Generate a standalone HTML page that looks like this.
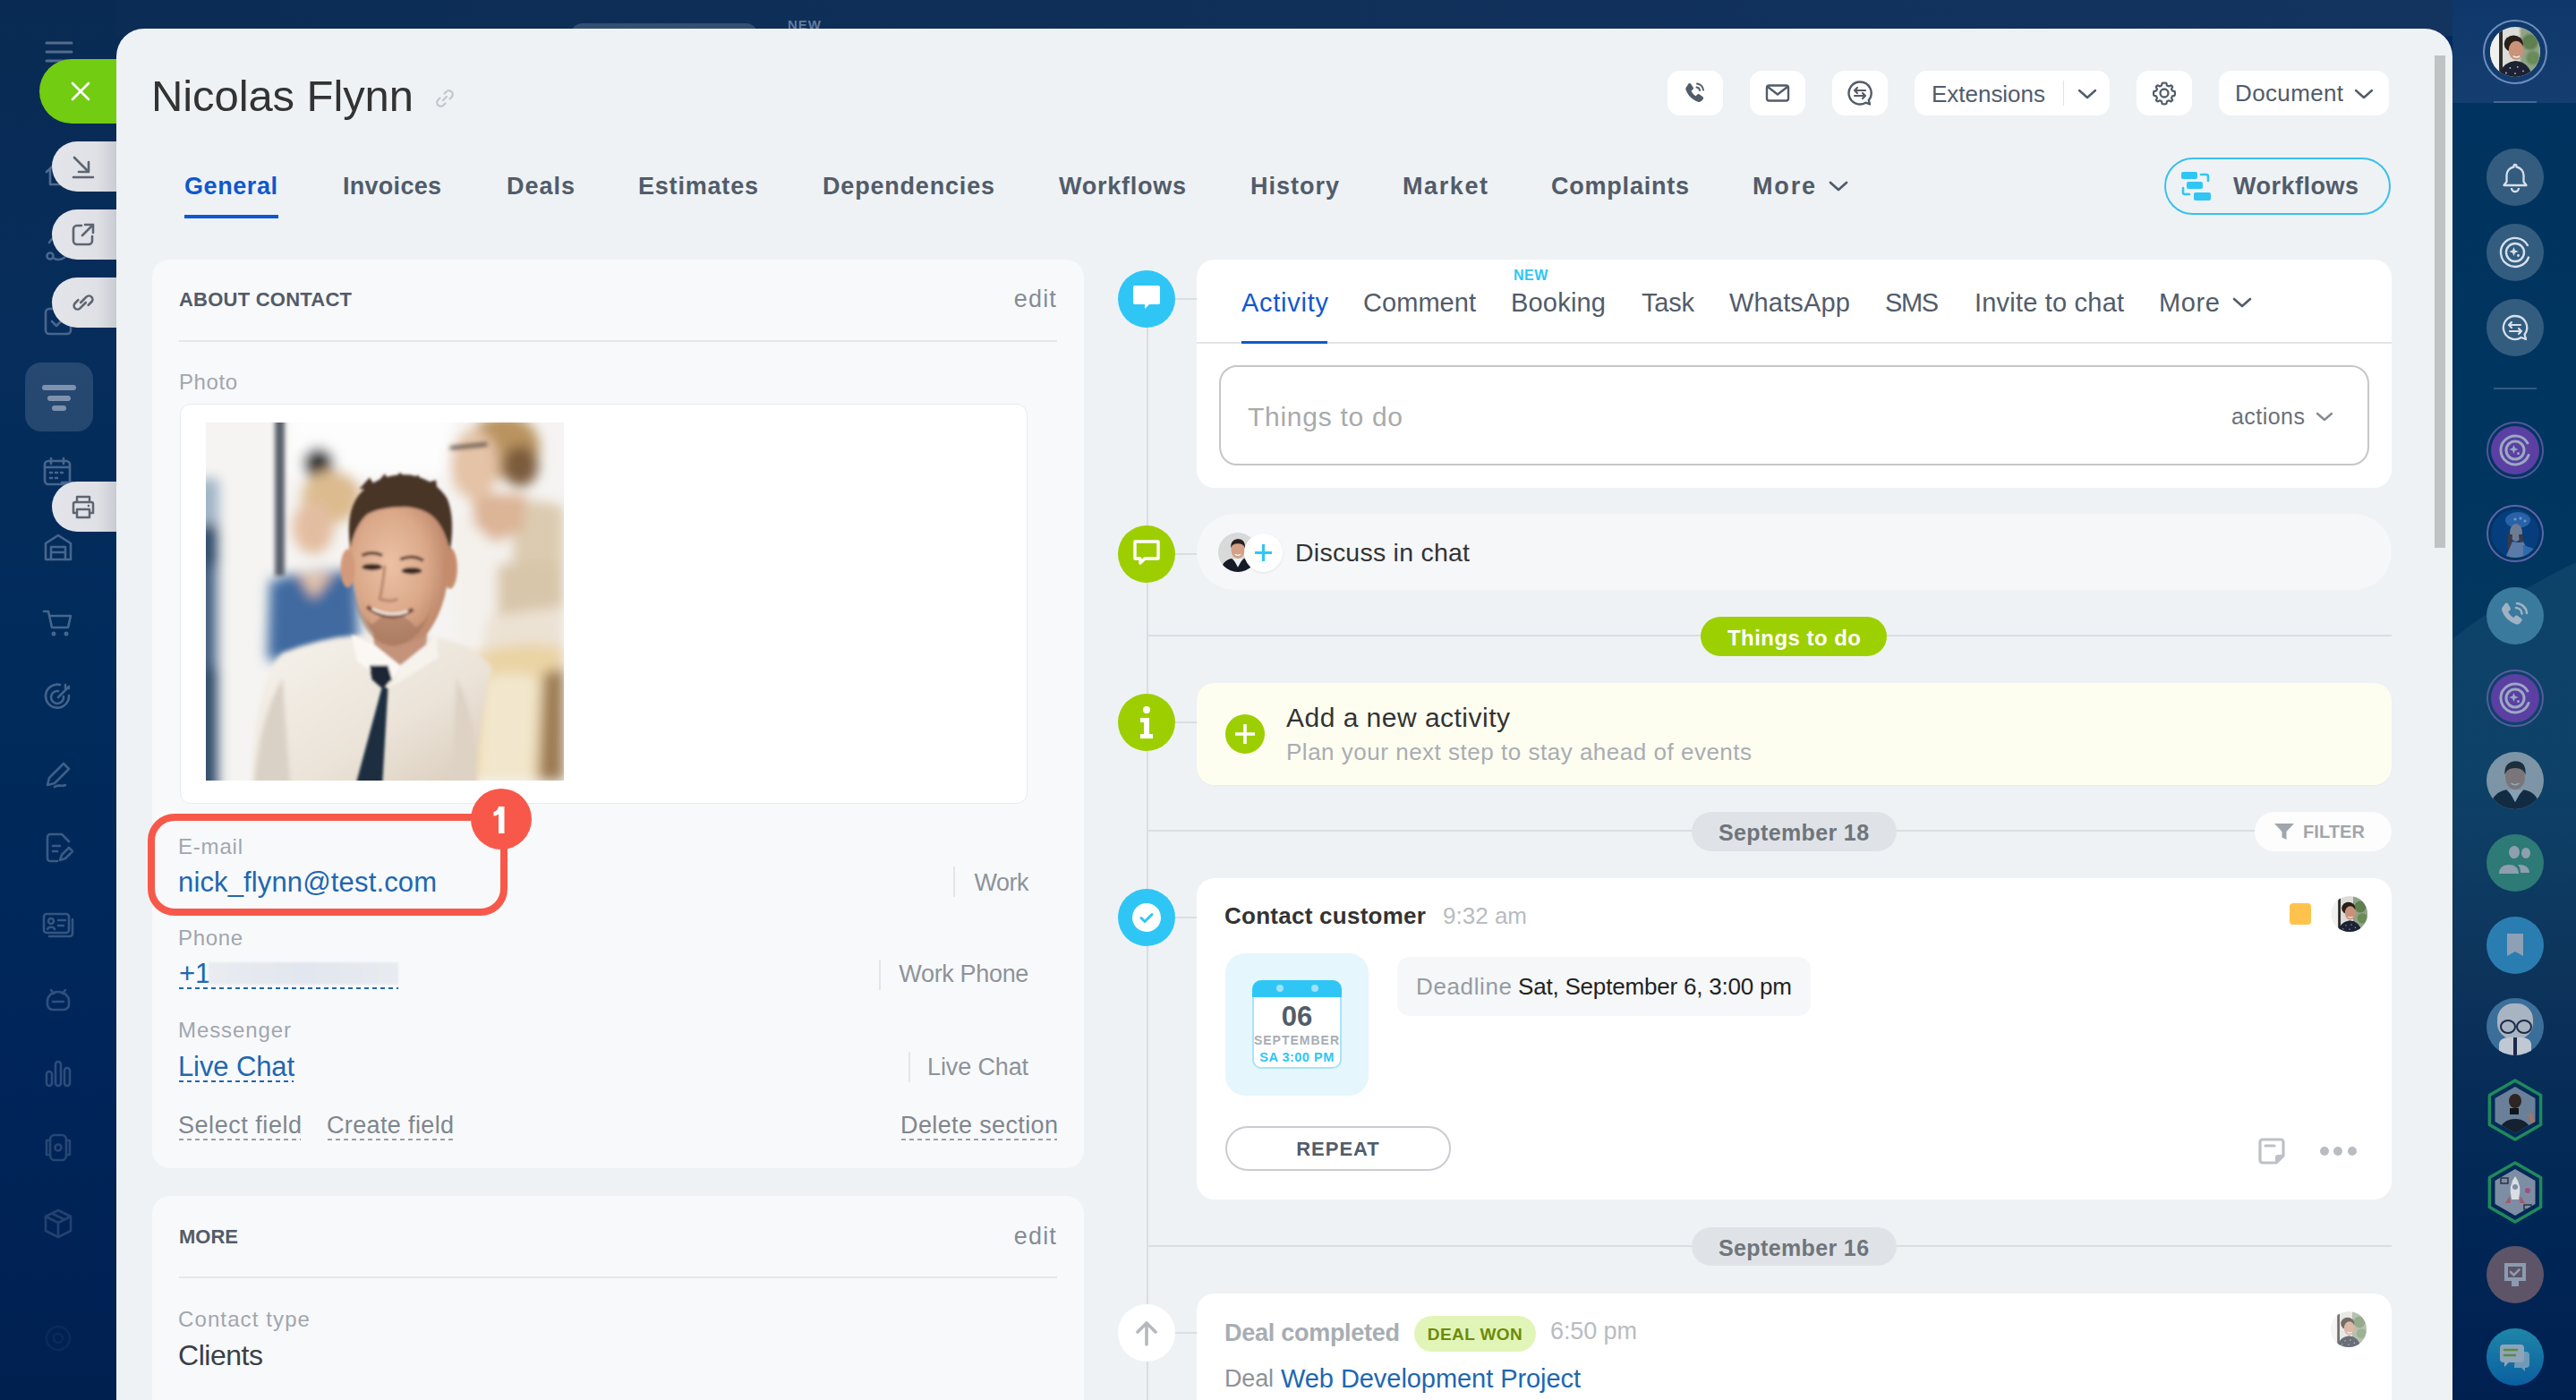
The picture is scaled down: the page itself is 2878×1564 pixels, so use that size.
<!DOCTYPE html>
<html><head><meta charset="utf-8"><style>
html,body{margin:0;padding:0;background:#002b5a;}
body{width:2878px;height:1564px;overflow:hidden;position:relative;font-family:"Liberation Sans", sans-serif;background:#002b5a;}
.t{position:absolute;line-height:1;white-space:nowrap;}
svg{display:block;}
</style></head><body>
<div style="position:absolute;left:0px;top:0px;width:140px;height:1564px;background:linear-gradient(180deg,#092b53 0%,#062d5c 25%,#002b5a 50%,#00255a 75%,#002050 100%);"></div><div style="position:absolute;left:130px;top:0px;width:2620px;height:40px;background:linear-gradient(90deg,#0b2c55 0%,#10305a 50%,#12345f 100%);"></div><div style="position:absolute;left:637px;top:26px;width:210px;height:30px;background:rgba(255,255,255,0.16);border-radius:14px;"></div><div class="t" style="left:880px;top:20.3px;font-size:15px;color:#647c9c;font-weight:700;letter-spacing:1px;">NEW</div><div style="position:absolute;left:2740px;top:0px;width:138px;height:1564px;background:linear-gradient(180deg,#00335f 0%,#00365f 40%,#063a62 55%,#0a3058 70%,#002656 88%,#002050 100%);"></div><div style="position:absolute;left:2740px;top:0px;width:138px;height:115px;background:linear-gradient(180deg,#0f376b,#153e70);"></div><div style="position:absolute;left:2786px;top:113px;width:48px;height:2px;background:rgba(160,180,210,0.35);"></div><div style="position:absolute;left:2786px;top:433px;width:48px;height:2px;background:rgba(160,180,210,0.30);"></div><div style="position:absolute;left:2740px;top:0;width:138px;height:1564px;overflow:hidden;"><div style="position:absolute;left:-285px;top:555px;width:1490px;height:1490px;border-radius:50%;background:linear-gradient(180deg,rgba(60,110,140,0.25) 0%,rgba(60,110,140,0.12) 25%,rgba(60,110,140,0) 45%);"></div></div><div style="position:absolute;left:2774px;top:22px;width:72px;height:72px;border-radius:50%;box-sizing:border-box;border:2.5px solid rgba(140,170,215,0.75);"></div><div style="position:absolute;left:2782px;top:30px;width:56px;height:56px;"><svg width="56" height="56" viewBox="0 0 100 100"><defs><clipPath id="wcr1"><circle cx="50" cy="50" r="50"/></clipPath><filter id="wfr1"><feGaussianBlur stdDeviation="1.5"/></filter></defs><g clip-path="url(#wcr1)"><rect width="100" height="100" fill="#dcdcd8"/><rect x="0" width="22" height="100" fill="#f2f1ee"/><g filter="url(#wfr1)"><rect x="60" y="0" width="40" height="100" fill="#8fa386"/><circle cx="80" cy="30" r="16" fill="#5f7f4f"/><circle cx="86" cy="62" r="14" fill="#6a8a58"/></g><rect x="18" y="5" width="7" height="95" fill="#2b2b2b"/><ellipse cx="47" cy="34" rx="19" ry="17" fill="#2a1e19"/><ellipse cx="52" cy="47" rx="15" ry="19" fill="#c99379"/><path d="M46 58q7 5 13 0" stroke="#fff" stroke-width="2.5" fill="none"/><path d="M18 100q4-28 32-32q28 2 34 32z" fill="#1c2233"/><circle cx="40" cy="82" r="1.6" fill="#bcc4d6"/><circle cx="55" cy="80" r="1.6" fill="#bcc4d6"/><circle cx="66" cy="88" r="1.6" fill="#bcc4d6"/><circle cx="32" cy="92" r="1.6" fill="#bcc4d6"/><circle cx="50" cy="93" r="1.6" fill="#bcc4d6"/></g></svg></div><div style="position:absolute;left:2778px;top:166px;width:64px;height:64px;border-radius:50%;background:rgba(255,255,255,0.2);"></div><svg style="position:absolute;left:2792px;top:180px;" width="36" height="36" viewBox="0 0 36 36"><path d="M18 4a1.5 1.5 0 0 1 1.5 1.5v1a9.5 9.5 0 0 1 8 9.5v7l3 4H5.5l3-4v-7a9.5 9.5 0 0 1 8-9.5v-1A1.5 1.5 0 0 1 18 4zM14 30a4 4 0 0 0 8 0" stroke="#d6e0ec" stroke-width="2.3" fill="none" stroke-linejoin="round"/></svg><div style="position:absolute;left:2778px;top:250px;width:64px;height:64px;border-radius:50%;background:rgba(255,255,255,0.2);"></div><svg style="position:absolute;left:2790px;top:262px;" width="40" height="40" viewBox="0 0 40 40"><path d="M33.9 12A16 16 0 1 0 35 25.5" stroke="#d6e0ec" stroke-width="2.4" fill="none" stroke-linecap="round"/><circle cx="20" cy="20" r="10" stroke="#d6e0ec" stroke-width="2.4" fill="none"/><path d="M18.5 14l1.4 3.6 3.6 1.4-3.6 1.4-1.4 3.6-1.4-3.6-3.6-1.4 3.6-1.4z" fill="#d6e0ec"/><circle cx="23.5" cy="23.5" r="1.4" fill="#d6e0ec"/></svg><div style="position:absolute;left:2778px;top:334px;width:64px;height:64px;border-radius:50%;background:rgba(255,255,255,0.2);"></div><svg style="position:absolute;left:2792px;top:348px;" width="36" height="36" viewBox="0 0 36 36"><path d="M18 5a13 13 0 1 0 6.8 24l5.2 2-1.4-5.2A13 13 0 0 0 18 5z" stroke="#d6e0ec" stroke-width="2.3" fill="none" stroke-linejoin="round"/><path d="M11 15h13M14 12l-3 3 3 3M25 22H12M22 19l3 3-3 3" stroke="#d6e0ec" stroke-width="2.2" fill="none" stroke-linecap="round" stroke-linejoin="round"/></svg><div style="position:absolute;left:2778px;top:471px;width:64px;height:64px;border-radius:50%;box-sizing:border-box;border:2px solid rgba(130,110,190,0.6);background:transparent;"></div><div style="position:absolute;left:2783px;top:476px;width:54px;height:54px;border-radius:50%;background:#5b3fa3;"></div><svg style="position:absolute;left:2790px;top:483px;" width="40" height="40" viewBox="0 0 40 40"><path d="M33.9 12A16 16 0 1 0 35 25.5" stroke="#9aaac0" stroke-width="3" fill="none" stroke-linecap="round"/><circle cx="20" cy="20" r="10" stroke="#9aaac0" stroke-width="3" fill="none"/><path d="M18.5 14l1.4 3.6 3.6 1.4-3.6 1.4-1.4 3.6-1.4-3.6-3.6-1.4 3.6-1.4z" fill="#9aaac0"/><circle cx="23.5" cy="23.5" r="1.5" fill="#9aaac0"/></svg><div style="position:absolute;left:2778px;top:564px;width:64px;height:64px;border-radius:50%;box-sizing:border-box;border:2.5px solid rgba(125,115,200,0.75);"></div><svg style="position:absolute;left:2783px;top:569px" width="54" height="54" viewBox="0 0 54 54"><defs><clipPath id="gclip"><circle cx="27" cy="27" r="27"/></clipPath></defs><g clip-path="url(#gclip)"><rect width="54" height="54" fill="#063d7c"/><ellipse cx="30" cy="12" rx="14" ry="9" fill="#2a62a8"/><circle cx="27" cy="11" r="1.6" fill="#6a9ad0"/><circle cx="33" cy="10" r="1.6" fill="#6a9ad0"/><circle cx="38" cy="13" r="1.4" fill="#6a9ad0"/><ellipse cx="28" cy="26" rx="7" ry="10" fill="#6d7c92"/><path d="M19 28q-2 14 2 26h5q-4-10-2-26z" fill="#3a3a48"/><path d="M35 28q3 14-1 26h-4q3-10 1-26z" fill="#3a3a48"/><path d="M24 36q10 2 12 0l10 18H16z" fill="#5a7aa8"/><path d="M36 40l12 4v10H36z" fill="#2f6ab0"/></g></svg><div style="position:absolute;left:2778px;top:656px;width:64px;height:64px;border-radius:50%;background:#3a7a9c;"></div><svg style="position:absolute;left:2790px;top:668px;" width="40" height="40" viewBox="0 0 40 40"><path d="M9 6c1-.9 2.4-.7 3 .4l2.6 4.3c.6 1.1.4 2.4-.6 3.2l-1.8 1.4c1.2 2.8 3.3 5.2 6 6.7l1.5-1.7c.8-.9 2.1-1.1 3.1-.4l4 2.9c1 .8 1.2 2.3.3 3.3l-1.8 2.1c-1.2 1.3-3 1.7-4.6 1C13 26.5 7.8 21 5.2 14c-.6-1.6 0-3.4 1.3-4.5z" fill="#9fb2c4"/><path d="M22 6a12 12 0 0 1 11 11M21 11a7 7 0 0 1 6.5 6.5" stroke="#9fb2c4" stroke-width="2.6" fill="none" stroke-linecap="round"/></svg><div style="position:absolute;left:2778px;top:748px;width:64px;height:64px;border-radius:50%;box-sizing:border-box;border:2px solid rgba(130,110,190,0.6);background:transparent;"></div><div style="position:absolute;left:2783px;top:753px;width:54px;height:54px;border-radius:50%;background:#5b3fa3;"></div><svg style="position:absolute;left:2790px;top:760px;" width="40" height="40" viewBox="0 0 40 40"><path d="M33.9 12A16 16 0 1 0 35 25.5" stroke="#9aaac0" stroke-width="3" fill="none" stroke-linecap="round"/><circle cx="20" cy="20" r="10" stroke="#9aaac0" stroke-width="3" fill="none"/><path d="M18.5 14l1.4 3.6 3.6 1.4-3.6 1.4-1.4 3.6-1.4-3.6-3.6-1.4 3.6-1.4z" fill="#9aaac0"/><circle cx="23.5" cy="23.5" r="1.5" fill="#9aaac0"/></svg><div style="position:absolute;left:2778px;top:840px;width:64px;height:64px;opacity:0.55;"><svg width="64" height="64" viewBox="0 0 100 100"><defs><clipPath id="mcr2"><circle cx="50" cy="50" r="50"/></clipPath></defs><g clip-path="url(#mcr2)"><rect width="100" height="100" fill="#d8dad9"/><ellipse cx="50" cy="44" rx="17" ry="22" fill="#d3a186"/><path d="M32 40q-2-22 18-24q20 0 18 24q-3-12-18-12q-15 0-18 12z" fill="#2a211c"/><path d="M43 55q7 5 14 0" stroke="#fff" stroke-width="2.5" fill="none"/><path d="M5 100q5-30 30-34l15 16 15-16q25 4 30 34z" fill="#161b26"/><path d="M38 66l12 22 12-22z" fill="#eceff2"/></g></svg></div><div style="position:absolute;left:2778px;top:932px;width:64px;height:64px;border-radius:50%;background:#2d7a76;"></div><svg style="position:absolute;left:2788px;top:942px;" width="44" height="44" viewBox="0 0 44 44"><path d="M15 10a6 7 0 1 1 0 .1zM4 34c0-7 5-10 11-10s11 3 11 10z" fill="#8e9fae"/><path d="M29 11a5 6 0 1 1 0 .1zM27 24c6 0 11 3 11 9H28c0-4-1-7-3-9z" fill="#8e9fae"/></svg><div style="position:absolute;left:2778px;top:1024px;width:64px;height:64px;border-radius:50%;background:#2a7db0;"></div><svg style="position:absolute;left:2792px;top:1038px;" width="36" height="36" viewBox="0 0 36 36"><path d="M9 5h18v25l-9-5-9 5z" fill="#8ea0b6"/></svg><div style="position:absolute;left:2778px;top:1115px;width:64px;height:64px;border-radius:50%;overflow:hidden;background:#3b6f9a;"><div style="position:absolute;left:12px;top:6px;width:40px;height:40px;border-radius:45%;background:#a9b4c2;"></div><div style="position:absolute;left:15px;top:24px;width:14px;height:12px;border-radius:50%;border:2px solid #1b2a4a;"></div><div style="position:absolute;left:33px;top:24px;width:14px;height:12px;border-radius:50%;border:2px solid #1b2a4a;"></div><div style="position:absolute;left:14px;top:44px;width:36px;height:24px;background:#c0c8d4;border-radius:30% 30% 0 0;"></div><div style="position:absolute;left:30px;top:44px;width:4px;height:20px;background:#1b2a4a;"></div></div><svg style="position:absolute;left:2774px;top:1204px;" width="72" height="72" viewBox="0 0 72 72"><defs><clipPath id="hc1240"><polygon points="36.0,10.0 58.5,23.0 58.5,49.0 36.0,62.0 13.5,49.0 13.5,23.0"/></clipPath></defs><polygon points="36.0,3.0 64.6,19.5 64.6,52.5 36.0,69.0 7.4,52.5 7.4,19.5" stroke="#1f8a5c" stroke-width="3.5" fill="none" stroke-linejoin="round"/><g clip-path="url(#hc1240)"><rect width="72" height="72" fill="#6a8099"/><ellipse cx="36" cy="26" rx="7" ry="8" fill="#2d2522"/><path d="M16 72c0-18 8-26 20-26s20 8 20 26z" fill="#152030"/><rect x="30" y="34" width="10" height="7" fill="#101418"/><path d="M52 40q6 10 4 28" stroke="#c07050" stroke-width="5" fill="none" opacity="0.6"/></g></svg><svg style="position:absolute;left:2774px;top:1296px;" width="72" height="72" viewBox="0 0 72 72"><defs><clipPath id="hc1332"><polygon points="36.0,10.0 58.5,23.0 58.5,49.0 36.0,62.0 13.5,49.0 13.5,23.0"/></clipPath></defs><polygon points="36.0,3.0 64.6,19.5 64.6,52.5 36.0,69.0 7.4,52.5 7.4,19.5" stroke="#1f8a5c" stroke-width="3.5" fill="none" stroke-linejoin="round"/><g clip-path="url(#hc1332)"><rect width="72" height="72" fill="#7d8ea4"/><path d="M36 18q8 10 4 26h-8q-4-16 4-26z" fill="#d9dde4"/><circle cx="36" cy="30" r="3" fill="#7d8ea4"/><path d="M30 40l-5 8h6zM42 40l5 8h-6z" fill="#a05a6a"/><circle cx="50" cy="34" r="3" fill="#a05080"/><path d="M20 20h8v6h-8zM46 50h8v5h-8z" stroke="#2a3344" stroke-width="1.5" fill="none"/></g></svg><div style="position:absolute;left:2778px;top:1392px;width:64px;height:64px;border-radius:50%;background:#5d5467;"></div><svg style="position:absolute;left:2792px;top:1406px;" width="36" height="36" viewBox="0 0 36 36"><path d="M6 5h24v20h-8v6h-8v-6H6z" fill="#8c9bb0"/><rect x="10" y="9" width="16" height="12" fill="#5d5467"/><path d="M13 15l3.5 3.5 6-6" stroke="#8c9bb0" stroke-width="2.6" fill="none" stroke-linecap="round"/></svg><div style="position:absolute;left:2778px;top:1484px;width:64px;height:64px;border-radius:50%;background:linear-gradient(180deg,#1f86a8,#0a5fa0);"></div><svg style="position:absolute;left:2788px;top:1494px;" width="44" height="44" viewBox="0 0 44 44"><path d="M22 16h12a4 4 0 0 1 4 4v10a4 4 0 0 1-4 4h-1v4l-4-4h-8z" fill="#6f9ab8"/><path d="M9 8h19a4 4 0 0 1 4 4v12a4 4 0 0 1-4 4H15l-5 5v-5H9a4 4 0 0 1-4-4V12a4 4 0 0 1 4-4z" fill="#8ea4b9"/><path d="M10 14h14M10 20h12" stroke="#5b8a40" stroke-width="2.6" stroke-linecap="round"/></svg><div style="position:absolute;left:130px;top:32px;width:2610px;height:1600px;background:#eef2f5;border-radius:31px 31px 0 0;"></div><div style="position:absolute;left:2720px;top:62px;width:12px;height:550px;background:#bfc3c4;"></div><svg style="position:absolute;left:50px;top:45px;opacity:0.75;" width="32" height="26" viewBox="0 0 32 26"><path d="M2 3h28M2 13h28M2 23h28" stroke="#6e82a2" stroke-width="3" stroke-linecap="round"/></svg><svg style="position:absolute;left:47px;top:175px;opacity:0.55;" width="36" height="36" viewBox="0 0 36 36"><path d="M5 17L18 5l13 12M9 14v17h18V14" stroke="#8aa0c0" stroke-width="2.6" fill="none" stroke-linecap="round" stroke-linejoin="round"/></svg><svg style="position:absolute;left:47px;top:259px;opacity:0.5;" width="36" height="36" viewBox="0 0 36 36"><path d="M8 12a11 11 0 0 1 21 3M29 22a11 11 0 0 1-17 7" stroke="#8aa0c0" stroke-width="2.6" fill="none" stroke-linecap="round" stroke-linejoin="round"/><circle cx="9" cy="27" r="3.5" stroke="#8aa0c0" stroke-width="2.6" fill="none" stroke-linecap="round" stroke-linejoin="round"/></svg><svg style="position:absolute;left:47px;top:341px;opacity:0.5;" width="36" height="36" viewBox="0 0 36 36"><rect x="4" y="4" width="28" height="28" rx="4" stroke="#8aa0c0" stroke-width="2.6" fill="none" stroke-linecap="round" stroke-linejoin="round"/><path d="M11 18l5 5 9-9" stroke="#8aa0c0" stroke-width="2.6" fill="none" stroke-linecap="round" stroke-linejoin="round"/></svg><div style="position:absolute;left:28px;top:405px;width:76px;height:77px;background:rgba(255,255,255,0.13);border-radius:18px;"></div><svg style="position:absolute;left:47px;top:424px;opacity:0.85;" width="38" height="38" viewBox="0 0 38 38"><path d="M3 9h32M9 21h20M14 32h10" stroke="#8fa0b8" stroke-width="6" stroke-linecap="round"/></svg><svg style="position:absolute;left:47px;top:509px;opacity:0.5;" width="36" height="36" viewBox="0 0 36 36"><rect x="3" y="6" width="28" height="26" rx="4" stroke="#8aa0c0" stroke-width="2.6" fill="none" stroke-linecap="round" stroke-linejoin="round"/><path d="M3 13h28M10 3v6M24 3v6" stroke="#8aa0c0" stroke-width="2.6" fill="none" stroke-linecap="round" stroke-linejoin="round"/><path d="M9 19h2M15 19h2M21 19h2M9 25h2M15 25h2" stroke="#8aa0c0" stroke-width="2.6" fill="none" stroke-linecap="round" stroke-linejoin="round"/><path d="M22 30h12" stroke="#8aa0c0" stroke-width="2.6" fill="none" stroke-linecap="round" stroke-linejoin="round"/></svg><svg style="position:absolute;left:47px;top:593px;opacity:0.5;" width="36" height="36" viewBox="0 0 36 36"><path d="M4 14L18 5l14 9v18H4z" stroke="#8aa0c0" stroke-width="2.6" fill="none" stroke-linecap="round" stroke-linejoin="round"/><path d="M10 32V18h16v14M10 24h16" stroke="#8aa0c0" stroke-width="2.6" fill="none" stroke-linecap="round" stroke-linejoin="round"/></svg><svg style="position:absolute;left:47px;top:678px;opacity:0.5;" width="36" height="36" viewBox="0 0 36 36"><path d="M2 5h5l4 18h18l3-13H9" stroke="#8aa0c0" stroke-width="2.6" fill="none" stroke-linecap="round" stroke-linejoin="round"/><circle cx="13" cy="30" r="2.5" fill="#8aa0c0"/><circle cx="27" cy="30" r="2.5" fill="#8aa0c0"/></svg><svg style="position:absolute;left:47px;top:761px;opacity:0.48;" width="36" height="36" viewBox="0 0 36 36"><path d="M30 16a13 13 0 1 1-10-12" stroke="#8aa0c0" stroke-width="2.6" fill="none" stroke-linecap="round" stroke-linejoin="round"/><path d="M24 17a7 7 0 1 1-6-6" stroke="#8aa0c0" stroke-width="2.6" fill="none" stroke-linecap="round" stroke-linejoin="round"/><path d="M18 18L30 6M26 4v4h4" stroke="#8aa0c0" stroke-width="2.6" fill="none" stroke-linecap="round" stroke-linejoin="round"/></svg><svg style="position:absolute;left:47px;top:847px;opacity:0.45;" width="36" height="36" viewBox="0 0 36 36"><path d="M6 30l2-8L24 6l6 6-16 16z" stroke="#8aa0c0" stroke-width="2.6" fill="none" stroke-linecap="round" stroke-linejoin="round"/><path d="M14 32c4-3 8 0 12-2" stroke="#8aa0c0" stroke-width="2.6" fill="none" stroke-linecap="round" stroke-linejoin="round"/></svg><svg style="position:absolute;left:47px;top:929px;opacity:0.42;" width="36" height="36" viewBox="0 0 36 36"><path d="M22 3H9a3 3 0 0 0-3 3v24a3 3 0 0 0 3 3h8M22 3l8 8" stroke="#8aa0c0" stroke-width="2.6" fill="none" stroke-linecap="round" stroke-linejoin="round"/><path d="M12 16h8M12 22h5M20 32l2-6 8-8 4 4-8 8z" stroke="#8aa0c0" stroke-width="2.6" fill="none" stroke-linecap="round" stroke-linejoin="round"/></svg><svg style="position:absolute;left:47px;top:1015px;opacity:0.38;" width="36" height="36" viewBox="0 0 36 36"><rect x="2" y="6" width="28" height="21" rx="3" stroke="#8aa0c0" stroke-width="2.6" fill="none" stroke-linecap="round" stroke-linejoin="round"/><path d="M34 12v16a3 3 0 0 1-3 3H8" stroke="#8aa0c0" stroke-width="2.6" fill="none" stroke-linecap="round" stroke-linejoin="round"/><circle cx="10" cy="14" r="3" stroke="#8aa0c0" stroke-width="2.6" fill="none" stroke-linecap="round" stroke-linejoin="round"/><path d="M6 23c1-3 7-3 8 0M18 13h8M18 19h6" stroke="#8aa0c0" stroke-width="2.6" fill="none" stroke-linecap="round" stroke-linejoin="round"/></svg><svg style="position:absolute;left:47px;top:1098px;opacity:0.35;" width="36" height="36" viewBox="0 0 36 36"><path d="M6 20a12 10 0 0 1 24 0v4a6 6 0 0 1-6 6H12a6 6 0 0 1-6-6z" stroke="#8aa0c0" stroke-width="2.6" fill="none" stroke-linecap="round" stroke-linejoin="round"/><path d="M10 8l3 4M26 8l-3 4M12 21h12" stroke="#8aa0c0" stroke-width="2.6" fill="none" stroke-linecap="round" stroke-linejoin="round"/></svg><svg style="position:absolute;left:47px;top:1181px;opacity:0.32;" width="36" height="36" viewBox="0 0 36 36"><rect x="5" y="16" width="6" height="16" rx="3" stroke="#8aa0c0" stroke-width="2.6" fill="none" stroke-linecap="round" stroke-linejoin="round"/><rect x="15" y="5" width="6" height="27" rx="3" stroke="#8aa0c0" stroke-width="2.6" fill="none" stroke-linecap="round" stroke-linejoin="round"/><rect x="25" y="12" width="6" height="20" rx="3" stroke="#8aa0c0" stroke-width="2.6" fill="none" stroke-linecap="round" stroke-linejoin="round"/></svg><svg style="position:absolute;left:47px;top:1264px;opacity:0.28;" width="36" height="36" viewBox="0 0 36 36"><rect x="9" y="4" width="18" height="28" rx="5" stroke="#8aa0c0" stroke-width="2.6" fill="none" stroke-linecap="round" stroke-linejoin="round"/><path d="M9 10H5v16h4M27 10h4v16h-4" stroke="#8aa0c0" stroke-width="2.6" fill="none" stroke-linecap="round" stroke-linejoin="round"/><circle cx="18" cy="18" r="3.5" stroke="#8aa0c0" stroke-width="2.6" fill="none" stroke-linecap="round" stroke-linejoin="round"/></svg><svg style="position:absolute;left:47px;top:1349px;opacity:0.25;" width="36" height="36" viewBox="0 0 36 36"><path d="M18 3l14 7v16l-14 7-14-7V10z" stroke="#8aa0c0" stroke-width="2.6" fill="none" stroke-linecap="round" stroke-linejoin="round"/><path d="M4 10l14 7 14-7M18 17v16M11 6.5l14 7" stroke="#8aa0c0" stroke-width="2.6" fill="none" stroke-linecap="round" stroke-linejoin="round"/></svg><svg style="position:absolute;left:47px;top:1477px;opacity:0.07;" width="36" height="36" viewBox="0 0 36 36"><circle cx="18" cy="18" r="13" stroke="#8aa0c0" stroke-width="2.6" fill="none" stroke-linecap="round" stroke-linejoin="round"/><circle cx="18" cy="18" r="5" stroke="#8aa0c0" stroke-width="2.6" fill="none" stroke-linecap="round" stroke-linejoin="round"/></svg><div style="position:absolute;left:44px;top:66px;width:86px;height:72px;background:#72cc12;border-radius:36px 0 0 36px;"></div><svg style="position:absolute;left:79px;top:91px;" width="22" height="22" viewBox="0 0 22 22"><path d="M2 2L20 20M20 2L2 20" stroke="#fff" stroke-width="2.6" stroke-linecap="round"/></svg><div style="position:absolute;left:58px;top:158px;width:72px;height:56px;background:linear-gradient(90deg,#e3e5ea 0%,#dfe1e6 70%,#c9ccd3 100%);border-radius:28px 0 0 28px;"></div><div style="position:absolute;left:58px;top:234px;width:72px;height:56px;background:linear-gradient(90deg,#e3e5ea 0%,#dfe1e6 70%,#c9ccd3 100%);border-radius:28px 0 0 28px;"></div><div style="position:absolute;left:58px;top:310px;width:72px;height:56px;background:linear-gradient(90deg,#e3e5ea 0%,#dfe1e6 70%,#c9ccd3 100%);border-radius:28px 0 0 28px;"></div><div style="position:absolute;left:58px;top:538px;width:72px;height:56px;background:linear-gradient(90deg,#e3e5ea 0%,#dfe1e6 70%,#c9ccd3 100%);border-radius:28px 0 0 28px;"></div><svg style="position:absolute;left:78px;top:171px;" width="30" height="30" viewBox="0 0 30 30"><path d="M5 5L21 21M21 10V21H10M4 27H26" stroke="#5d6570" stroke-width="2.6" fill="none" stroke-linecap="round" stroke-linejoin="round"/></svg><svg style="position:absolute;left:78px;top:247px;" width="30" height="30" viewBox="0 0 30 30"><path d="M13 5H8a4 4 0 0 0-4 4v13a4 4 0 0 0 4 4h13a4 4 0 0 0 4-4v-5M17 4h9v9M26 4L14 16" stroke="#5d6570" stroke-width="2.6" fill="none" stroke-linecap="round" stroke-linejoin="round"/></svg><svg style="position:absolute;left:78px;top:323px;" width="30" height="30" viewBox="0 0 30 30"><g transform="rotate(-45 15 15)"><path d="M17 17H8A4 4 0 0 1 8 9H13M13 13H22A4 4 0 0 1 22 21H17" stroke="#5d6570" stroke-width="2.6" fill="none" stroke-linecap="round" transform="translate(0 0)"/></g></svg><svg style="position:absolute;left:77px;top:551px;" width="32" height="30" viewBox="0 0 32 30"><path d="M9 10V4h14v6M9 22H5V12a2 2 0 0 1 2-2h18a2 2 0 0 1 2 2v10h-4M9 18h14v9H9z" stroke="#5d6570" stroke-width="2.5" fill="none" stroke-linejoin="round"/><circle cx="22" cy="14" r="1.3" fill="#5d6570"/></svg><div class="t" style="left:169px;top:82.5px;font-size:49px;color:#333;font-weight:400;letter-spacing:-0.09px;">Nicolas Flynn</div><svg style="position:absolute;left:484px;top:97px;" width="26" height="26" viewBox="0 0 26 26"><path d="M11 15l4-4M12.5 7.5l2-2a4.2 4.2 0 0 1 6 6l-2 2M13.5 18.5l-2 2a4.2 4.2 0 0 1-6-6l2-2" stroke="#c5c9ce" stroke-width="2.4" fill="none" stroke-linecap="round"/></svg><div style="position:absolute;left:1863px;top:79px;width:62px;height:50px;background:#fff;border-radius:14px;"></div><div style="position:absolute;left:1955px;top:79px;width:62px;height:50px;background:#fff;border-radius:14px;"></div><div style="position:absolute;left:2047px;top:79px;width:62px;height:50px;background:#fff;border-radius:14px;"></div><div style="position:absolute;left:2139px;top:79px;width:218px;height:50px;background:#fff;border-radius:14px;"></div><div style="position:absolute;left:2387px;top:79px;width:62px;height:50px;background:#fff;border-radius:14px;"></div><div style="position:absolute;left:2479px;top:79px;width:190px;height:50px;background:#fff;border-radius:14px;"></div><svg style="position:absolute;left:1879px;top:89px;" width="30" height="30" viewBox="0 0 30 30"><path d="M7.5 4.5c1-.8 2.2-.6 2.8.4l2.3 3.6c.6 1 .4 2.1-.5 2.8l-1.6 1.2c1 2.4 2.8 4.5 5.2 5.8l1.3-1.5c.7-.8 1.9-1 2.8-.3l3.5 2.5c.9.7 1.1 2 .3 2.9l-1.6 1.9c-1 1.1-2.6 1.5-4 .9C11.5 22.5 6.8 17.6 4.5 11.3c-.5-1.4 0-3 1.1-3.9z" fill="#525c69"/><path d="M17 4.5a8 8 0 0 1 7 7M16.5 8.5a4 4 0 0 1 3.5 3.5" stroke="#525c69" stroke-width="2" fill="none" stroke-linecap="round"/></svg><svg style="position:absolute;left:1971px;top:89px;" width="30" height="30" viewBox="0 0 30 30"><rect x="3" y="6.5" width="24" height="17" rx="2.5" stroke="#525c69" stroke-width="2.4" fill="none"/><path d="M4 8l11 8.5L26 8" stroke="#525c69" stroke-width="2.4" fill="none" stroke-linejoin="round"/></svg><svg style="position:absolute;left:2062px;top:88px;" width="32" height="32" viewBox="0 0 32 32"><path d="M16 3.5a12.5 12.5 0 1 0 6.5 23.2l4.5 1.8-1.2-4.6A12.5 12.5 0 0 0 16 3.5z" stroke="#525c69" stroke-width="2.4" fill="none" stroke-linejoin="round"/><path d="M10 13h12M13 10l-3 3 3 3M22 19H10M19 16l3 3-3 3" stroke="#525c69" stroke-width="2.2" fill="none" stroke-linecap="round" stroke-linejoin="round"/></svg><div class="t" style="left:2158px;top:92.0px;font-size:26px;color:#525c69;font-weight:400;letter-spacing:-0.02px;">Extensions</div><div style="position:absolute;left:2305px;top:90px;width:1px;height:28px;background:#dfe2e6;"></div><svg style="position:absolute;left:2320px;top:98px;" width="24" height="14" viewBox="0 0 24 14"><path d="M3 3l9 8 9-8" stroke="#525c69" stroke-width="2.4" fill="none" stroke-linecap="round" stroke-linejoin="round"/></svg><svg style="position:absolute;left:2403px;top:89px;" width="30" height="30" viewBox="0 0 30 30"><path d="M15 3.5l2.3.3.7 2.7 2 1 2.5-1.2 1.7 1.6-1.2 2.5 1 2 2.7.7.3 2.3-.3 2.3-2.7.7-1 2 1.2 2.5-1.7 1.6-2.5-1.2-2 1-.7 2.7-2.3.3-2.3-.3-.7-2.7-2-1-2.5 1.2-1.7-1.6 1.2-2.5-1-2-2.7-.7-.3-2.3.3-2.3 2.7-.7 1-2-1.2-2.5 1.7-1.6 2.5 1.2 2-1 .7-2.7z" stroke="#525c69" stroke-width="2.2" fill="none" stroke-linejoin="round"/><circle cx="15" cy="15" r="4.5" stroke="#525c69" stroke-width="2.3" fill="none"/></svg><div class="t" style="left:2497px;top:91.0px;font-size:26px;color:#525c69;font-weight:400;letter-spacing:0.36px;">Document</div><svg style="position:absolute;left:2629px;top:98px;" width="24" height="14" viewBox="0 0 24 14"><path d="M3 3l9 8 9-8" stroke="#525c69" stroke-width="2.4" fill="none" stroke-linecap="round" stroke-linejoin="round"/></svg><div class="t" style="left:206px;top:195.1px;font-size:27px;color:#0f58d0;font-weight:700;letter-spacing:0.57px;">General</div><div class="t" style="left:383px;top:195.1px;font-size:27px;color:#525c69;font-weight:700;letter-spacing:0.28px;">Invoices</div><div class="t" style="left:566px;top:195.1px;font-size:27px;color:#525c69;font-weight:700;letter-spacing:0.98px;">Deals</div><div class="t" style="left:713px;top:195.1px;font-size:27px;color:#525c69;font-weight:700;letter-spacing:0.8px;">Estimates</div><div class="t" style="left:919px;top:195.1px;font-size:27px;color:#525c69;font-weight:700;letter-spacing:0.81px;">Dependencies</div><div class="t" style="left:1183px;top:195.1px;font-size:27px;color:#525c69;font-weight:700;letter-spacing:0.75px;">Workflows</div><div class="t" style="left:1397px;top:195.1px;font-size:27px;color:#525c69;font-weight:700;letter-spacing:0.99px;">History</div><div class="t" style="left:1567px;top:195.1px;font-size:27px;color:#525c69;font-weight:700;letter-spacing:1.59px;">Market</div><div class="t" style="left:1733px;top:195.1px;font-size:27px;color:#525c69;font-weight:700;letter-spacing:0.78px;">Complaints</div><div class="t" style="left:1958px;top:195.1px;font-size:27px;color:#525c69;font-weight:700;letter-spacing:1.83px;">More</div><div style="position:absolute;left:206px;top:240px;width:105px;height:4px;background:#0f58d0;"></div><svg style="position:absolute;left:2041px;top:200px;" width="26" height="16" viewBox="0 0 26 16"><path d="M4 4l9 8 9-8" stroke="#525c69" stroke-width="2.8" fill="none" stroke-linecap="round" stroke-linejoin="round"/></svg><div style="position:absolute;left:2418px;top:176px;width:253px;height:64px;box-sizing:border-box;border:2px solid #3bbfeb;border-radius:32px;"></div><svg style="position:absolute;left:2436px;top:191px;" width="36" height="34" viewBox="0 0 36 34"><rect x="1" y="1" width="18" height="8" rx="2" fill="#2fc6f6"/><rect x="7" y="12" width="18" height="8" rx="2" fill="#2fc6f6"/><rect x="15" y="24" width="19" height="9" rx="2" fill="#2fc6f6"/><path d="M23 4h6a2 2 0 0 1 2 2v5M3 19v5a2 2 0 0 0 2 2h5" stroke="#2fc6f6" stroke-width="2.6" fill="none" stroke-linecap="round"/></svg><div class="t" style="left:2495px;top:195.1px;font-size:27px;color:#525c69;font-weight:700;letter-spacing:0.5px;">Workflows</div><div style="position:absolute;left:170px;top:290px;width:1041px;height:1015px;background:#f8f9fb;border-radius:20px;"></div><div class="t" style="left:200px;top:324.4px;font-size:22px;color:#525c69;font-weight:700;letter-spacing:0.23px;">ABOUT CONTACT</div><div class="t" style="right:1697px;top:321.1px;font-size:27px;color:#868c93;font-weight:400;letter-spacing:1.15px;">edit</div><div style="position:absolute;left:200px;top:380px;width:981px;height:2px;background:#e4e7eb;"></div><div class="t" style="left:200px;top:414.7px;font-size:24px;color:#a1a6ad;font-weight:400;letter-spacing:0.57px;">Photo</div><div style="position:absolute;left:201px;top:451px;width:947px;height:447px;box-sizing:border-box;background:#fff;border:1.5px solid #e8eaed;border-radius:12px;"></div><div style="position:absolute;left:230px;top:472px;width:400px;height:400px;overflow:hidden;background:#f3f4f4;"><svg width="400" height="400" viewBox="0 0 1400 1400" style="position:absolute;left:0;top:0">
<defs>
<filter id="b1" x="-30%" y="-30%" width="160%" height="160%"><feGaussianBlur stdDeviation="24"/></filter>
<filter id="b2" x="-30%" y="-30%" width="160%" height="160%"><feGaussianBlur stdDeviation="9"/></filter>
<filter id="b3" x="-30%" y="-30%" width="160%" height="160%"><feGaussianBlur stdDeviation="5"/></filter>
<radialGradient id="skin" cx="0.42" cy="0.45" r="0.65"><stop offset="0" stop-color="#ecc0a4"/><stop offset="0.55" stop-color="#dba98a"/><stop offset="1" stop-color="#b67e62"/></radialGradient>
<linearGradient id="shirt" x1="0" y1="0" x2="1" y2="1"><stop offset="0" stop-color="#f6f2ec"/><stop offset="0.6" stop-color="#ebe3d8"/><stop offset="1" stop-color="#d8cbb9"/></linearGradient>
</defs>
<rect width="1400" height="1400" fill="#f5f4f2"/>
<g filter="url(#b1)">
<rect x="320" y="-50" width="650" height="260" fill="#fdfdfd"/>
<rect x="-40" y="220" width="90" height="200" fill="#9fb2c6"/>
<rect x="-40" y="400" width="85" height="1100" fill="#2c4666"/>
<rect x="10" y="560" width="30" height="400" fill="#5a7898"/>
<circle cx="440" cy="160" r="60" fill="#2e2e2e"/>
<ellipse cx="490" cy="290" rx="115" ry="105" fill="#dcbb8e"/>
<ellipse cx="420" cy="410" rx="80" ry="105" fill="#e3bda0"/>
<path d="M250 620 Q420 560 590 590 L600 920 L240 930z" fill="#3f6ba0"/>
<path d="M360 590 L420 690 L500 590z" fill="#e4c4aa"/>
<path d="M960 360 Q1100 330 1230 330 L1260 960 L990 960z" fill="#f4f1ec"/>
<path d="M1200 300 Q1320 300 1400 330 L1400 960 L1200 960z" fill="#dccbb0"/>
<path d="M1140 560 Q1300 520 1400 560 L1400 760 L1140 760z" fill="#d8c6aa"/><path d="M1100 760 L1400 720 L1400 900 L1080 920z" fill="#ece2d4"/>
<path d="M1040 280 L1250 280 L1240 420 L1130 470 L1050 400z" fill="#dcb496"/>
<ellipse cx="1165" cy="95" rx="140" ry="125" fill="#b9935f"/>
<ellipse cx="1230" cy="170" rx="70" ry="80" fill="#7c5c3e"/>
<ellipse cx="1050" cy="165" rx="95" ry="135" fill="#e4c3a6"/>
<path d="M1020 920 Q1200 840 1400 880 L1400 1400 L980 1400z" fill="#ead3a4"/>
<path d="M1080 1000 Q1200 960 1300 1000 L1280 1400 L1060 1400z" fill="#f2e6cc"/>
<path d="M1320 980 L1400 960 L1400 1400 L1300 1400z" fill="#9c7a52"/>
</g>
<g filter="url(#b2)">
<rect x="270" y="-20" width="38" height="620" fill="#59606a"/>
<path d="M955 100 L1100 85" stroke="#4a4038" stroke-width="12" fill="none"/>
</g>
<g filter="url(#b2)">
<path d="M180 1420 Q190 1000 300 900 Q450 840 600 830 L900 840 Q1060 870 1120 960 Q1080 1100 1050 1420z" fill="url(#shirt)"/>
<path d="M190 1420 Q210 1150 300 1000 L330 1420z" fill="#dad1c6"/>
<path d="M980 1000 Q1060 1150 1060 1420 L960 1420z" fill="#ddd2c4"/>
</g>
<g filter="url(#b3)">
<path d="M650 790 L870 790 L860 880 L760 950 L660 880z" fill="#c4937a"/>
<path d="M570 830 L660 870 L760 950 L720 1030 L590 930z" fill="#fbf8f4"/>
<path d="M900 830 L860 870 L760 950 L730 1030 L910 920z" fill="#f6f2ec"/>
<path d="M560 520 Q545 330 760 300 Q960 320 950 520 Q955 700 870 820 Q780 890 690 860 Q590 790 560 520z" fill="url(#skin)"/>
<ellipse cx="555" cy="570" rx="28" ry="75" fill="#d29a7a"/>
<ellipse cx="955" cy="570" rx="28" ry="80" fill="#c58c6c"/>
<path d="M565 490 Q540 330 620 260 Q700 195 800 205 Q900 225 945 300 Q975 380 955 500 Q935 420 900 380 Q860 335 780 330 Q680 330 630 360 Q585 400 565 490z" fill="#4a3427"/>
<path d="M600 260 L640 215 L660 245 L700 200 L720 235 L760 195 L790 230 L830 205 L850 240 L900 225 L905 270z" fill="#4a3427"/>
<path d="M575 640 Q600 860 730 875 Q870 860 900 640 Q880 780 820 800 Q740 700 650 790 Q600 760 575 640z" fill="#9a7058" opacity="0.55"/>
<path d="M610 520 Q650 500 690 520" stroke="#5a3e30" stroke-width="12" fill="none"/>
<path d="M760 535 Q810 515 850 540" stroke="#5a3e30" stroke-width="12" fill="none"/>
<ellipse cx="650" cy="565" rx="40" ry="13" fill="#3a2a22"/>
<ellipse cx="805" cy="580" rx="40" ry="13" fill="#3a2a22"/>
<path d="M700 560 Q690 650 680 690 Q720 705 750 690" stroke="#b8826a" stroke-width="10" fill="none"/>
<path d="M630 720 Q720 790 810 730" stroke="#7a4a3a" stroke-width="16" fill="none"/>
<path d="M650 728 Q720 765 790 738" stroke="#f3ede6" stroke-width="10" fill="none"/>
<path d="M640 950 L712 950 L728 1005 L690 1040 L650 1005z" fill="#1b2636"/>
<path d="M690 1030 L585 1420 L690 1420 L712 1040z" fill="#1e2d40"/>
</g>
</svg></div><div class="t" style="left:199px;top:933.7px;font-size:24px;color:#a1a6ad;font-weight:400;letter-spacing:0.8px;">E-mail</div><div class="t" style="left:199px;top:969.8px;font-size:31px;color:#2067b0;font-weight:400;letter-spacing:0.14px;">nick_flynn@test.com</div><div style="position:absolute;left:1065px;top:968px;width:2px;height:34px;background:#e3e6e9;"></div><div class="t" style="right:1729px;top:973.1px;font-size:27px;color:#8d939a;font-weight:400;letter-spacing:-0.51px;">Work</div><div style="position:absolute;left:165px;top:909px;width:402px;height:114px;box-sizing:border-box;border:8px solid #f85849;border-radius:30px;"></div><div style="position:absolute;left:526px;top:881px;width:68px;height:68px;border-radius:50%;background:#f85849;"></div><svg style="position:absolute;left:548px;top:899px;" width="20" height="34" viewBox="0 0 20 34"><path d="M9 2H15.5V32H9V10.5Q7 12.5 3.5 12.5V8Q7.5 7.5 9 2Z" fill="#fff"/></svg><div class="t" style="left:199px;top:1035.7px;font-size:24px;color:#a1a6ad;font-weight:400;letter-spacing:0.65px;">Phone</div><div class="t" style="left:200px;top:1071.8px;font-size:31px;color:#2067b0;font-weight:400;">+1</div><div style="position:absolute;left:233px;top:1075px;width:212px;height:25px;background:linear-gradient(90deg,#e9ecf1,#e2e6ee 50%,#e8ebf0);filter:blur(1px);"></div><div style="position:absolute;left:200px;top:1103px;width:245px;height:2px;background:repeating-linear-gradient(90deg,#2067b0 0 5px,transparent 5px 9px);"></div><div style="position:absolute;left:982px;top:1072px;width:2px;height:34px;background:#e3e6e9;"></div><div class="t" style="right:1729px;top:1075.1px;font-size:27px;color:#8d939a;font-weight:400;letter-spacing:-0.34px;">Work Phone</div><div class="t" style="left:199px;top:1138.7px;font-size:24px;color:#a1a6ad;font-weight:400;letter-spacing:0.91px;">Messenger</div><div class="t" style="left:199px;top:1175.8px;font-size:31px;color:#2067b0;font-weight:400;letter-spacing:-0.12px;">Live Chat</div><div style="position:absolute;left:200px;top:1207px;width:128px;height:2px;background:repeating-linear-gradient(90deg,#2067b0 0 5px,transparent 5px 9px);"></div><div style="position:absolute;left:1015px;top:1175px;width:2px;height:34px;background:#e3e6e9;"></div><div class="t" style="right:1729px;top:1179.1px;font-size:27px;color:#8d939a;font-weight:400;letter-spacing:-0.13px;">Live Chat</div><div class="t" style="left:199px;top:1244.1px;font-size:27px;color:#80868e;font-weight:400;letter-spacing:0.54px;">Select field</div><div style="position:absolute;left:200px;top:1272px;width:136px;height:2px;background:repeating-linear-gradient(90deg,#9ba0a7 0 5px,transparent 5px 9px);"></div><div class="t" style="left:365px;top:1244.1px;font-size:27px;color:#80868e;font-weight:400;letter-spacing:0.36px;">Create field</div><div style="position:absolute;left:366px;top:1272px;width:140px;height:2px;background:repeating-linear-gradient(90deg,#9ba0a7 0 5px,transparent 5px 9px);"></div><div class="t" style="left:1006px;top:1244.1px;font-size:27px;color:#80868e;font-weight:400;letter-spacing:0.38px;">Delete section</div><div style="position:absolute;left:1007px;top:1272px;width:174px;height:2px;background:repeating-linear-gradient(90deg,#9ba0a7 0 5px,transparent 5px 9px);"></div><div style="position:absolute;left:170px;top:1336px;width:1041px;height:300px;background:#f8f9fb;border-radius:20px;"></div><div class="t" style="left:200px;top:1371.4px;font-size:22px;color:#525c69;font-weight:700;">MORE</div><div class="t" style="right:1697px;top:1368.1px;font-size:27px;color:#868c93;font-weight:400;letter-spacing:1.15px;">edit</div><div style="position:absolute;left:200px;top:1426px;width:981px;height:2px;background:#e4e7eb;"></div><div class="t" style="left:199px;top:1461.7px;font-size:24px;color:#a1a6ad;font-weight:400;letter-spacing:1.11px;">Contact type</div><div class="t" style="left:199px;top:1497.9px;font-size:32px;color:#3a3f47;font-weight:400;letter-spacing:-0.47px;">Clients</div><div style="position:absolute;left:1281px;top:334px;width:2px;height:1300px;background:#dadde2;"></div><div style="position:absolute;left:1282px;top:333px;width:56px;height:2px;background:#dadde2;"></div><div style="position:absolute;left:1282px;top:618px;width:56px;height:2px;background:#dadde2;"></div><div style="position:absolute;left:1282px;top:806px;width:56px;height:2px;background:#dadde2;"></div><div style="position:absolute;left:1282px;top:1024px;width:56px;height:2px;background:#dadde2;"></div><div style="position:absolute;left:1282px;top:1488px;width:56px;height:2px;background:#dadde2;"></div><div style="position:absolute;left:1337px;top:290px;width:1335px;height:255px;background:#fff;border-radius:20px;"></div><div style="position:absolute;left:1249px;top:302px;width:64px;height:64px;border-radius:50%;background:#2fc6f6;"></div><svg style="position:absolute;left:1262px;top:316px;" width="38" height="36" viewBox="0 0 38 36"><path d="M4 5a2 2 0 0 1 2-2h26a2 2 0 0 1 2 2v17a2 2 0 0 1-2 2H22l-5 5v-5H6a2 2 0 0 1-2-2z" fill="#fff"/></svg><div class="t" style="left:1387px;top:323.5px;font-size:29px;color:#1058d0;font-weight:400;letter-spacing:0.74px;">Activity</div><div class="t" style="left:1523px;top:323.5px;font-size:29px;color:#525c69;font-weight:400;letter-spacing:0.05px;">Comment</div><div class="t" style="left:1688px;top:323.5px;font-size:29px;color:#525c69;font-weight:400;letter-spacing:0.2px;">Booking</div><div class="t" style="left:1834px;top:323.5px;font-size:29px;color:#525c69;font-weight:400;letter-spacing:-0.21px;">Task</div><div class="t" style="left:1932px;top:323.5px;font-size:29px;color:#525c69;font-weight:400;letter-spacing:0.17px;">WhatsApp</div><div class="t" style="left:2106px;top:323.5px;font-size:29px;color:#525c69;font-weight:400;letter-spacing:-1.42px;">SMS</div><div class="t" style="left:2206px;top:323.5px;font-size:29px;color:#525c69;font-weight:400;letter-spacing:0.2px;">Invite to chat</div><div class="t" style="left:2412px;top:323.5px;font-size:29px;color:#525c69;font-weight:400;letter-spacing:0.64px;">More</div><div class="t" style="left:1691px;top:299.5px;font-size:16px;color:#2fc6f6;font-weight:700;letter-spacing:0.5px;">NEW</div><svg style="position:absolute;left:2493px;top:331px;" width="24" height="14" viewBox="0 0 24 14"><path d="M3 3l9 8 9-8" stroke="#525c69" stroke-width="2.6" fill="none" stroke-linecap="round" stroke-linejoin="round"/></svg><div style="position:absolute;left:1337px;top:382px;width:1335px;height:2px;background:#e3e5e8;"></div><div style="position:absolute;left:1387px;top:381px;width:96px;height:3px;background:#1058d0;"></div><div style="position:absolute;left:1362px;top:408px;width:1285px;height:112px;box-sizing:border-box;border:2px solid #c6c7c8;border-radius:20px;background:#fff;"></div><div class="t" style="left:1394px;top:450.6px;font-size:30px;color:#a9aaab;font-weight:400;letter-spacing:0.72px;">Things to do</div><div class="t" style="left:2493px;top:452.8px;font-size:25px;color:#6a7079;font-weight:400;letter-spacing:0.46px;">actions</div><svg style="position:absolute;left:2586px;top:459px;" width="22" height="14" viewBox="0 0 22 14"><path d="M3 3l8 7 8-7" stroke="#858a91" stroke-width="2.4" fill="none" stroke-linecap="round" stroke-linejoin="round"/></svg><div style="position:absolute;left:1337px;top:574px;width:1335px;height:85px;background:#f5f7f9;border-radius:42px;"></div><div style="position:absolute;left:1249px;top:587px;width:64px;height:64px;border-radius:50%;background:#9dcf00;"></div><svg style="position:absolute;left:1263px;top:600px;" width="36" height="38" viewBox="0 0 36 38"><path d="M5 5h26v19H16l-5 5v-5H5z" stroke="#fff" stroke-width="3.4" fill="none" stroke-linejoin="round"/></svg><div style="position:absolute;left:1361px;top:595px;width:44px;height:44px;"><svg width="44" height="44" viewBox="0 0 100 100"><defs><clipPath id="mca1"><circle cx="50" cy="50" r="50"/></clipPath></defs><g clip-path="url(#mca1)"><rect width="100" height="100" fill="#d8dad9"/><ellipse cx="50" cy="44" rx="17" ry="22" fill="#d3a186"/><path d="M32 40q-2-22 18-24q20 0 18 24q-3-12-18-12q-15 0-18 12z" fill="#2a211c"/><path d="M43 55q7 5 14 0" stroke="#fff" stroke-width="2.5" fill="none"/><path d="M5 100q5-30 30-34l15 16 15-16q25 4 30 34z" fill="#161b26"/><path d="M38 66l12 22 12-22z" fill="#eceff2"/></g></svg></div><div style="position:absolute;left:1390px;top:596px;width:43px;height:43px;border-radius:50%;background:#fff;box-shadow:0 1px 3px rgba(0,0,0,0.08);"></div><svg style="position:absolute;left:1401px;top:607px;" width="21" height="21" viewBox="0 0 21 21"><path d="M10.5 1v19M1 10.5h19" stroke="#2fc6f6" stroke-width="3.2"/></svg><div class="t" style="left:1447px;top:602.9px;font-size:28.5px;color:#333;font-weight:400;letter-spacing:0.24px;">Discuss in chat</div><div style="position:absolute;left:1282px;top:709px;width:1390px;height:2px;background:#dadde2;"></div><div style="position:absolute;left:1900px;top:689px;width:208px;height:44px;border-radius:22px;background:#9dd000;"></div><div class="t" style="left:1930px;top:700.7px;font-size:24px;color:#fff;font-weight:700;letter-spacing:0.46px;">Things to do</div><div style="position:absolute;left:1337px;top:763px;width:1335px;height:114px;background:#fefef0;border-radius:20px;box-shadow:0 1px 2px rgba(0,0,0,0.03);"></div><div style="position:absolute;left:1249px;top:775px;width:64px;height:64px;border-radius:50%;background:#9dcf00;"></div><svg style="position:absolute;left:1269px;top:785px;" width="24" height="44" viewBox="0 0 24 44"><circle cx="12" cy="8" r="4" fill="#fff"/><path d="M5 17h10v18h4v5H5v-5h4V22H5z" fill="#fff"/></svg><div style="position:absolute;left:1369px;top:798px;width:44px;height:44px;border-radius:50%;background:#9dcf00;"></div><svg style="position:absolute;left:1378px;top:807px;" width="26" height="26" viewBox="0 0 26 26"><path d="M13 2v22M2 13h22" stroke="#fff" stroke-width="3.6"/></svg><div class="t" style="left:1437px;top:786.6px;font-size:30px;color:#333;font-weight:400;letter-spacing:0.48px;">Add a new activity</div><div class="t" style="left:1437px;top:827.0px;font-size:26px;color:#a8adb3;font-weight:400;letter-spacing:0.51px;">Plan your next step to stay ahead of events</div><div style="position:absolute;left:1282px;top:927px;width:1390px;height:2px;background:#dadde2;"></div><div style="position:absolute;left:1890px;top:907px;width:229px;height:44px;border-radius:22px;background:#dfe3e7;"></div><div class="t" style="left:1920px;top:917.8px;font-size:25px;color:#6f757c;font-weight:700;letter-spacing:0.37px;">September 18</div><div style="position:absolute;left:2519px;top:907px;width:153px;height:44px;border-radius:22px;background:#fdfdfe;"></div><svg style="position:absolute;left:2540px;top:918px;" width="24" height="22" viewBox="0 0 24 22"><path d="M1 2h22l-8.5 9v9l-5-2.5v-6.5z" fill="#a0a6ad"/></svg><div class="t" style="left:2573px;top:919.1px;font-size:20px;color:#a0a6ad;font-weight:700;letter-spacing:0.1px;">FILTER</div><div style="position:absolute;left:1337px;top:981px;width:1335px;height:359px;background:#fff;border-radius:20px;"></div><div style="position:absolute;left:1249px;top:993px;width:64px;height:64px;border-radius:50%;background:#2fc6f6;"></div><div style="position:absolute;left:1265px;top:1009px;width:32px;height:32px;border-radius:50%;background:#fff;"></div><svg style="position:absolute;left:1271px;top:1015px;" width="20" height="20" viewBox="0 0 20 20"><path d="M4 10.5l4 4 8-8" stroke="#2fc6f6" stroke-width="3" fill="none" stroke-linecap="round" stroke-linejoin="round"/></svg><div class="t" style="left:1368px;top:1010.0px;font-size:26px;color:#333;font-weight:700;letter-spacing:0.26px;">Contact customer</div><div class="t" style="left:1612px;top:1010.0px;font-size:26px;color:#b8bcc1;font-weight:400;letter-spacing:0.01px;">9:32 am</div><div style="position:absolute;left:2558px;top:1009px;width:24px;height:24px;background:#ffc34d;border-radius:4px;"></div><div style="position:absolute;left:2605px;top:1001px;width:40px;height:40px;"><svg width="40" height="40" viewBox="0 0 100 100"><defs><clipPath id="wca2"><circle cx="50" cy="50" r="50"/></clipPath><filter id="wfa2"><feGaussianBlur stdDeviation="1.5"/></filter></defs><g clip-path="url(#wca2)"><rect width="100" height="100" fill="#dcdcd8"/><rect x="0" width="22" height="100" fill="#f2f1ee"/><g filter="url(#wfa2)"><rect x="60" y="0" width="40" height="100" fill="#8fa386"/><circle cx="80" cy="30" r="16" fill="#5f7f4f"/><circle cx="86" cy="62" r="14" fill="#6a8a58"/></g><rect x="18" y="5" width="7" height="95" fill="#2b2b2b"/><ellipse cx="47" cy="34" rx="19" ry="17" fill="#2a1e19"/><ellipse cx="52" cy="47" rx="15" ry="19" fill="#c99379"/><path d="M46 58q7 5 13 0" stroke="#fff" stroke-width="2.5" fill="none"/><path d="M18 100q4-28 32-32q28 2 34 32z" fill="#1c2233"/><circle cx="40" cy="82" r="1.6" fill="#bcc4d6"/><circle cx="55" cy="80" r="1.6" fill="#bcc4d6"/><circle cx="66" cy="88" r="1.6" fill="#bcc4d6"/><circle cx="32" cy="92" r="1.6" fill="#bcc4d6"/><circle cx="50" cy="93" r="1.6" fill="#bcc4d6"/></g></svg></div><div style="position:absolute;left:1369px;top:1065px;width:160px;height:159px;background:#e5f6fd;border-radius:22px;"></div><div style="position:absolute;left:1399px;top:1095px;width:100px;height:99px;box-sizing:border-box;background:#fff;border:2px solid #a9e3f7;border-radius:10px;"></div><div style="position:absolute;left:1399px;top:1095px;width:100px;height:19px;background:#2fc6f6;border-radius:10px 10px 0 0;"></div><div style="position:absolute;left:1426px;top:1100px;width:8px;height:8px;border-radius:50%;background:#9fe2fb;"></div><div style="position:absolute;left:1465px;top:1100px;width:8px;height:8px;border-radius:50%;background:#9fe2fb;"></div><div class="t" style="left:1399px;width:100px;text-align:center;top:1120px;font-size:31px;font-weight:700;color:#525c69;">06</div><div class="t" style="left:1399px;width:100px;text-align:center;top:1155px;font-size:14px;font-weight:700;color:#a8adb3;letter-spacing:1px;">SEPTEMBER</div><div class="t" style="left:1399px;width:100px;text-align:center;top:1174px;font-size:14.5px;font-weight:700;color:#2fc6f6;letter-spacing:0.5px;">SA 3:00 PM</div><div style="position:absolute;left:1561px;top:1069px;width:462px;height:66px;background:#f5f7f8;border-radius:14px;"></div><div class="t" style="left:1582px;top:1089.0px;font-size:26px;color:#969ba2;font-weight:400;letter-spacing:0.62px;">Deadline</div><div class="t" style="left:1696px;top:1089.0px;font-size:26px;color:#222;font-weight:400;letter-spacing:-0.2px;">Sat, September 6, 3:00 pm</div><div style="position:absolute;left:1369px;top:1258px;width:252px;height:50px;box-sizing:border-box;border:2px solid #c9ccd0;border-radius:25px;"></div><div class="t" style="left:1369px;width:252px;text-align:center;top:1273px;font-size:22px;font-weight:700;color:#525c69;letter-spacing:1px;">REPEAT</div><svg style="position:absolute;left:2521px;top:1269px;" width="34" height="34" viewBox="0 0 34 34"><path d="M4 7a3 3 0 0 1 3-3h20a3 3 0 0 1 3 3v15l-8 8H7a3 3 0 0 1-3-3z" stroke="#bdc1c6" stroke-width="3.2" fill="none" stroke-linejoin="round"/><path d="M10 11h10" stroke="#bdc1c6" stroke-width="3.2" stroke-linecap="round"/><path d="M22 30v-6a2 2 0 0 1 2-2h6" fill="#bdc1c6" stroke="#bdc1c6" stroke-width="2"/></svg><div style="position:absolute;left:2592px;top:1281px;width:10px;height:10px;border-radius:50%;background:#b9bdc2;"></div><div style="position:absolute;left:2607px;top:1281px;width:10px;height:10px;border-radius:50%;background:#b9bdc2;"></div><div style="position:absolute;left:2623px;top:1281px;width:10px;height:10px;border-radius:50%;background:#b9bdc2;"></div><div style="position:absolute;left:1282px;top:1391px;width:1390px;height:2px;background:#dadde2;"></div><div style="position:absolute;left:1890px;top:1371px;width:229px;height:43px;border-radius:22px;background:#dfe3e7;"></div><div class="t" style="left:1920px;top:1381.8px;font-size:25px;color:#6f757c;font-weight:700;letter-spacing:0.37px;">September 16</div><div style="position:absolute;left:1337px;top:1445px;width:1335px;height:200px;background:#fff;border-radius:20px;"></div><div style="position:absolute;left:1249px;top:1457px;width:64px;height:64px;border-radius:50%;background:#fff;"></div><svg style="position:absolute;left:1266px;top:1473px;" width="30" height="32" viewBox="0 0 30 32"><path d="M15 29V5M5 15L15 5l10 10" stroke="#b5b9be" stroke-width="3.6" fill="none" stroke-linecap="round" stroke-linejoin="round"/></svg><div class="t" style="left:1368px;top:1476.1px;font-size:27px;color:#a8adb3;font-weight:700;letter-spacing:-0.27px;">Deal completed</div><div style="position:absolute;left:1580px;top:1470px;width:136px;height:40px;border-radius:20px;background:#e2f5b8;"></div><div class="t" style="left:1580px;width:136px;text-align:center;top:1481px;font-size:19px;font-weight:700;color:#6d8b05;letter-spacing:0.4px;">DEAL WON</div><div class="t" style="left:1732px;top:1474.1px;font-size:27px;color:#b8bcc1;font-weight:400;letter-spacing:-0.09px;">6:50 pm</div><div class="t" style="left:1368px;top:1527.1px;font-size:27px;color:#8d939a;font-weight:400;letter-spacing:-0.18px;">Deal</div><div class="t" style="left:1431px;top:1525.5px;font-size:29px;color:#2067b0;font-weight:400;letter-spacing:-0.06px;">Web Development Project</div><div style="position:absolute;left:2604px;top:1465px;width:40px;height:40px;opacity:0.65;"><svg width="40" height="40" viewBox="0 0 100 100"><defs><clipPath id="wca3"><circle cx="50" cy="50" r="50"/></clipPath><filter id="wfa3"><feGaussianBlur stdDeviation="1.5"/></filter></defs><g clip-path="url(#wca3)"><rect width="100" height="100" fill="#dcdcd8"/><rect x="0" width="22" height="100" fill="#f2f1ee"/><g filter="url(#wfa3)"><rect x="60" y="0" width="40" height="100" fill="#8fa386"/><circle cx="80" cy="30" r="16" fill="#5f7f4f"/><circle cx="86" cy="62" r="14" fill="#6a8a58"/></g><rect x="18" y="5" width="7" height="95" fill="#2b2b2b"/><ellipse cx="47" cy="34" rx="19" ry="17" fill="#2a1e19"/><ellipse cx="52" cy="47" rx="15" ry="19" fill="#c99379"/><path d="M46 58q7 5 13 0" stroke="#fff" stroke-width="2.5" fill="none"/><path d="M18 100q4-28 32-32q28 2 34 32z" fill="#1c2233"/><circle cx="40" cy="82" r="1.6" fill="#bcc4d6"/><circle cx="55" cy="80" r="1.6" fill="#bcc4d6"/><circle cx="66" cy="88" r="1.6" fill="#bcc4d6"/><circle cx="32" cy="92" r="1.6" fill="#bcc4d6"/><circle cx="50" cy="93" r="1.6" fill="#bcc4d6"/></g></svg></div>
</body></html>
